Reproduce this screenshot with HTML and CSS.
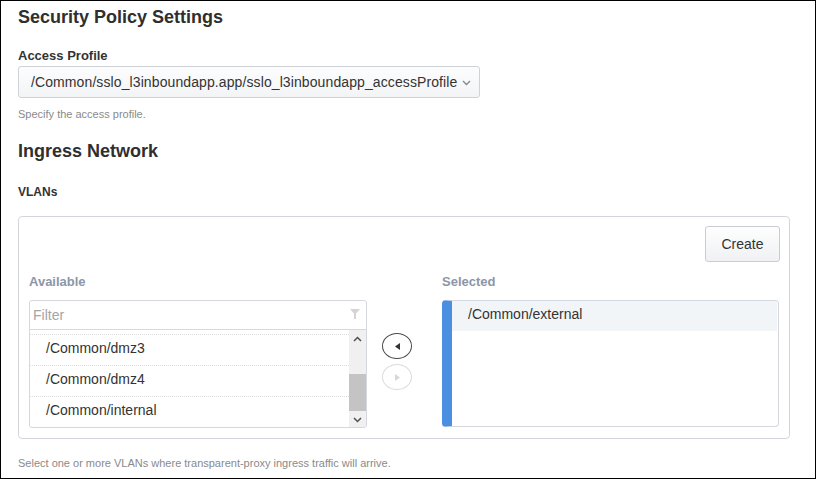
FILE: index.html
```html
<!DOCTYPE html>
<html>
<head>
<meta charset="utf-8">
<link rel="stylesheet" href="styles.css">
</head>
<body>
<div class="page">
  <h1 class="title">Security Policy Settings</h1>
  <div class="field-label">Access Profile</div>
  <div class="select">
    <span class="select-text">/Common/sslo_l3inboundapp.app/sslo_l3inboundapp_accessProfile</span>
    <svg class="chev" width="9" height="6" viewBox="0 0 9 6"><path d="M1 1l3.5 3.5L8 1" fill="none" stroke="#8a8a8a" stroke-width="1.4"/></svg>
  </div>
  <div class="hint">Specify the access profile.</div>
  <h1 class="title title-2">Ingress Network</h1>
  <div class="sub-label">VLANs</div>
  <div class="panel">
    <div class="panel-top">
      <button class="btn">Create</button>
    </div>
    <div class="dual">
      <div class="col">
        <div class="col-label">Available</div>
        <div class="list">
          <div class="filter">
            <span class="filter-text">Filter</span>
            <svg class="funnel" width="10" height="10" viewBox="0 0 10 10"><path d="M0 0h10L6 4.5V10H4V4.5z" fill="#d4d4d4"/></svg>
          </div>
          <div class="list-body">
            <div class="rows">
              <div class="row">/Common/dmz3</div>
              <div class="row">/Common/dmz4</div>
              <div class="row">/Common/internal</div>
            </div>
            <div class="scrollbar">
              <div class="sb-arrow"><svg width="9" height="6" viewBox="0 0 9 6"><path d="M1 5l3.5-3.5L8 5" fill="none" stroke="#505050" stroke-width="1.5"/></svg></div>
              <div class="sb-track"><div class="sb-thumb"></div></div>
              <div class="sb-arrow"><svg width="9" height="6" viewBox="0 0 9 6"><path d="M1 1l3.5 3.5L8 1" fill="none" stroke="#505050" stroke-width="1.5"/></svg></div>
            </div>
          </div>
        </div>
      </div>
      <div class="mid">
        <div class="move active"><svg width="5" height="7" viewBox="0 0 5 7"><path d="M5 0v7L0 3.5z" fill="#333"/></svg></div>
        <div class="move"><svg width="5" height="7" viewBox="0 0 5 7"><path d="M0 0v7l5-3.5z" fill="#d6d8de"/></svg></div>
      </div>
      <div class="col">
        <div class="col-label">Selected</div>
        <div class="sel-list">
          <div class="sel-row">/Common/external</div>
        </div>
      </div>
    </div>
  </div>
  <div class="hint foot">Select one or more VLANs where transparent-proxy ingress traffic will arrive.</div>
</div>
</body>
</html>
```

FILE: styles.css
```css
html, body {
  margin: 0;
  padding: 0;
}
body {
  width: 816px;
  height: 479px;
  box-sizing: border-box;
  border: 1px solid #000;
  overflow: hidden;
  background: #fff;
  font-family: "Liberation Sans", Arial, sans-serif;
  color: #333;
}
.page {
  padding: 5px 25px 0 17px;
}
.title {
  margin: 0;
  font-size: 18px;
  line-height: 22px;
  font-weight: bold;
  color: #2f2f2f;
}
.title-2 {
  margin-top: 19px;
}
.field-label {
  margin-top: 20px;
  font-size: 13px;
  line-height: 16px;
  font-weight: bold;
  color: #333;
}
.select {
  margin-top: 2px;
  width: 462px;
  height: 32px;
  box-sizing: border-box;
  border: 1px solid #cfd2d8;
  border-radius: 3px;
  background: linear-gradient(#fdfdfe, #f3f4f6);
  display: flex;
  align-items: center;
  padding: 0 8px 0 12px;
}
.select-text {
  flex: 1;
  font-size: 14px;
  letter-spacing: 0.1px;
  color: #333;
  white-space: nowrap;
}
.chev {
  flex: none;
  margin-top: 1px;
}
.hint {
  margin-top: 9px;
  font-size: 11px;
  line-height: 14px;
  color: #8a8a8a;
}
.sub-label {
  margin-top: 23px;
  font-size: 12px;
  line-height: 15px;
  font-weight: bold;
  color: #333;
}
.panel {
  margin-top: 16px;
  width: 772px;
  height: 223px;
  box-sizing: border-box;
  border: 1px solid #d2d5db;
  border-radius: 4px;
  padding: 9px 10px 0 10px;
}
.panel-top {
  display: flex;
  justify-content: flex-end;
}
.btn {
  width: 75px;
  height: 36px;
  border: 1px solid #c9ccd3;
  border-radius: 3px;
  background: linear-gradient(#fefefe, #f0f1f4);
  font-family: "Liberation Sans", Arial, sans-serif;
  font-size: 14px;
  color: #333;
  padding: 0;
  margin-right: -1px;
}
.dual {
  margin-top: 12px;
  display: grid;
  grid-template-columns: 338px 75px 337px;
}
.col-label {
  font-size: 13px;
  line-height: 16px;
  font-weight: bold;
  color: #8c96a8;
  margin-bottom: 10px;
}
.list {
  height: 128px;
  box-sizing: border-box;
  border: 1px solid #d5d8de;
  border-radius: 3px;
  overflow: hidden;
}
.filter {
  height: 28px;
  border-bottom: 1px solid #d5d8de;
  display: flex;
  align-items: center;
  padding: 0 6px 0 3px;
}
.filter-text {
  flex: 1;
  font-size: 14px;
  color: #a5a5a5;
}
.funnel {
  margin-top: -3px;
}
.list-body {
  display: flex;
  height: 98px;
}
.rows {
  flex: 1;
  padding-top: 4px;
}
.row {
  height: 30px;
  border-top: 1px dotted #dcdcdc;
  padding-left: 16px;
  font-size: 14px;
  line-height: 26px;
  color: #333;
}
.scrollbar {
  width: 17px;
  background: #f0f0f0;
  display: flex;
  flex-direction: column;
}
.sb-arrow {
  height: 17px;
  display: flex;
  align-items: center;
  justify-content: center;
}
.sb-track {
  flex: 1;
  display: flex;
  flex-direction: column;
  justify-content: flex-end;
}
.sb-thumb {
  height: 37px;
  background: #c4c4c4;
}
.mid {
  padding-top: 59px;
  padding-left: 15px;
  display: flex;
  flex-direction: column;
  gap: 5px;
}
.move {
  width: 30px;
  height: 26px;
  box-sizing: border-box;
  border: 1px solid #d9dbe2;
  border-radius: 50%;
  display: flex;
  align-items: center;
  justify-content: center;
}
.move.active {
  border-color: #4a4a4a;
}
.sel-list {
  height: 127px;
  box-sizing: border-box;
  border: 1px solid #d5d8de;
  border-left: 10px solid #4a8fe0;
  border-radius: 4px;
  padding-right: 1px;
}
.sel-row {
  height: 30px;
  box-sizing: border-box;
  background: #f2f5f8;
  padding: 4px 16px 0;
  font-size: 14px;
  line-height: 18px;
  color: #333;
}
.foot {
  margin-top: 17px;
}
```
